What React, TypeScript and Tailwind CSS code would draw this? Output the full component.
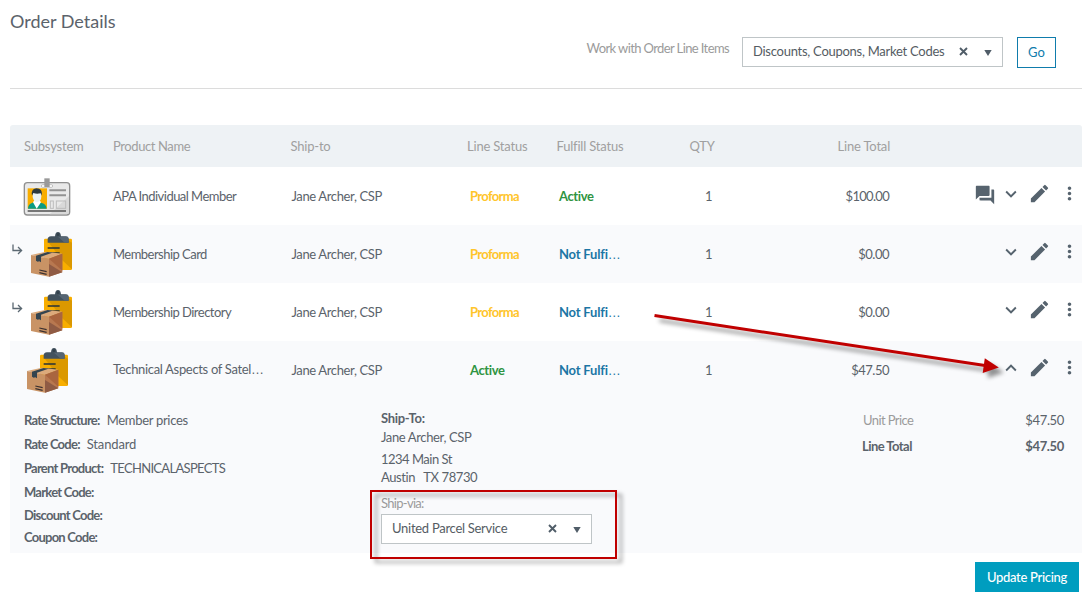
import type { ReactNode } from "react";
import { MdEdit, MdExpandLess, MdExpandMore, MdForum, MdMoreVert } from "react-icons/md";

function BadgeIcon() {
  return (
    <svg width="48" height="38" viewBox="0 0 144 114" className="block">
      <rect x="4" y="14" width="136" height="97" rx="9" fill="#e9e9e9" stroke="#909090" strokeWidth="4" />
      <path d="M80 109L138 54v48q0 7-7 7z" fill="#d9d9d9" />
      <rect x="55" y="20" width="34" height="8" rx="4" fill="#fff" stroke="#aaa" strokeWidth="2" />
      <rect x="64" y="1" width="16" height="26" fill="#999" />
      <rect x="14" y="31" width="58" height="61" fill="#f8ad00" />
      <path d="M15 92q0-14 13-18l12-5 14 5q16 3 17 18z" fill="#0b9b83" />
      <path d="M30 73l11 19 13-19-5-8H35z" fill="#fff" />
      <path d="M29 46q0-12 13-12t13 12v9q0 15-13 18Q29 69 29 55z" fill="#e9f2f5" />
      <path d="M27 53q-4-20 13-22 19 0 17 22l-4-7q-12 3-22-1z" fill="#2b3940" />
      <path d="M79 37h50M79 52h50" stroke="#929292" strokeWidth="6" />
      <rect x="82" y="69" width="9" height="22" fill="none" stroke="#bcbcbc" strokeWidth="3" />
      <rect x="100" y="69" width="28" height="22" fill="none" stroke="#bcbcbc" strokeWidth="3" />
      <path d="M14 99h115" stroke="#777" strokeWidth="6" />
    </svg>
  );
}

function PackageIcon() {
  return (
    <svg width="43" height="47" viewBox="90 198 129 141" className="block">
      <rect x="132" y="221" width="84" height="94" rx="4" fill="#f8ae00" />
      <path d="M143 229l64-2 9 6v80l-30-28z" fill="#db9800" />
      <path d="M143 233v-10q0-8 10-9h12q1-13 9-13t9 13h14q9 1 9 9v10z" fill="#43525e" />
      <path d="M174 215l30 0q2 4 2 18h-12z" fill="#566573" />
      <circle cx="174" cy="209" r="4" fill="#33414b" />
      <path d="M143 249h36M143 264h36" stroke="#263238" strokeWidth="5" />
      <path d="M93 270l44-10 50 6-40 16z" fill="#dcaa7b" />
      <path d="M93 270l54 11v54l-54-11z" fill="#c99365" />
      <path d="M147 281l40-15v56l-40 13z" fill="#b87850" />
      <path d="M147 297l40 25-40 13z" fill="#8f5b44" />
      <path d="M147 281l40-15v51z" fill="#a9653f" />
      <path d="M108 272l35-11 14 2-34 12v17l-5-3-5 1-5-3z" fill="#34444f" />
      <path d="M118 315l22 5M118 323l22 5" stroke="#3a3030" strokeWidth="3.5" />
    </svg>
  );
}

function ChildArrow() {
  return (
    <svg width="11" height="12" viewBox="0 0 11 12" className="block" fill="none" stroke="#5b6872" strokeWidth="1.3">
      <path d="M1 0.5v6h8.5M6 3l3.6 3.5L6 10" />
    </svg>
  );
}

function Select({ className, value }: { className: string; value: string }) {
  return (
    <div className={`flex h-[30px] items-center border border-[#bfc5c7] bg-white pl-[10px] text-[#555c63] ${className}`}>
      <span className="grow whitespace-nowrap pb-[2px]">{value}</span>
      <svg width="9" height="9" viewBox="0 0 9 9" className="mb-px mr-[16px] shrink-0" stroke="#505d68" strokeWidth="1.9">
        <path d="M1 1l7 7M8 1l-7 7" />
      </svg>
      <svg width="8" height="6" viewBox="0 0 8 6" className="mr-[10px] mt-px shrink-0">
        <path d="M0.3 0h7.4L4 6z" fill="#505d68" />
      </svg>
    </div>
  );
}

function Dots() {
  return <span className="font-['Liberation_Sans',sans-serif] font-normal tracking-normal">…</span>;
}

type Line = {
  name: ReactNode;
  kind: "badge" | "package";
  child?: boolean;
  line: string;
  fulfill: string;
  total: ReactNode;
  open?: boolean;
};

const lines: Line[] = [
  {
    name: "APA Individual Member",
    kind: "badge",
    line: "Proforma",
    fulfill: "Active",
    total: <span className="tracking-[-0.7px]">$100.00</span>,
  },
  { name: "Membership Card", kind: "package", child: true, line: "Proforma", fulfill: "Not Fulfi", total: "$0.00" },
  { name: "Membership Directory", kind: "package", child: true, line: "Proforma", fulfill: "Not Fulfi", total: "$0.00" },
  {
    name: (
      <>
        <span className="tracking-[-0.33px]">Technical Aspects of Satel</span>
        <Dots />
      </>
    ),
    kind: "package",
    line: "Active",
    fulfill: "Not Fulfi",
    total: "$47.50",
    open: true,
  },
];

function Status({ value }: { value: string }) {
  if (value === "Proforma") return <span className="font-bold tracking-[-0.65px] text-[#ffc52b]">Proforma</span>;
  if (value === "Active") return <span className="font-bold tracking-[-0.4px] text-[#2f9442]">Active</span>;
  return (
    <span className="text-[#1c76a5]">
      <b className="tracking-[-0.2px]">{value}</b>
      <Dots />
    </span>
  );
}

function Row({ item, shaded }: { item: Line; shaded: boolean }) {
  return (
    <div className={`flex h-[58px] items-center ${shaded ? "bg-[#f9fafc]" : "bg-white"}`}>
      <div className="flex h-full w-[103px] shrink-0">
        {item.kind === "badge" ? (
          <div className="pl-[13px] pt-[11px]">
            <BadgeIcon />
          </div>
        ) : (
          <>
            <div className={item.child ? "w-[20px] pl-[2px] pt-[19px]" : "w-[16px]"}>{item.child && <ChildArrow />}</div>
            <div className="pt-[6px]">
              <PackageIcon />
            </div>
          </>
        )}
      </div>
      <div className="w-[178px] shrink-0 whitespace-nowrap pb-px tracking-[-0.53px]">{item.name}</div>
      <div className="w-[179px] shrink-0 pb-px pl-[0.5px] tracking-[-0.37px]">Jane Archer, CSP</div>
      <div className="w-[89px] shrink-0">
        <Status value={item.line} />
      </div>
      <div className="w-[146px] shrink-0 whitespace-nowrap">
        <Status value={item.fulfill} />
      </div>
      <div className="flex w-[184px] shrink-0 pb-px">
        <span className="grow">1</span>
        <span className="tracking-[-0.5px]">{item.total}</span>
      </div>
      <div className="flex grow items-center justify-end pb-[6px] text-[#56636e]">
        {item.kind === "badge" && <MdForum className="mr-[4px] mt-[3px] size-[22px]" />}
        {item.open ? (
          <MdExpandLess className="mt-[2px] size-[22px]" />
        ) : (
          <MdExpandMore className="mt-[2px] size-[22px]" />
        )}
        <MdEdit className="ml-[6px] mt-px size-[23px]" />
        <MdMoreVert className="ml-[8px] mr-[2px] size-[21px]" />
      </div>
    </div>
  );
}

function Field({
  label,
  value,
  className,
  valueClass = "",
}: {
  label: string;
  value?: string;
  className: string;
  valueClass?: string;
}) {
  return (
    <div className={`flex items-center whitespace-nowrap ${className}`}>
      <b className="tracking-[-0.75px]">{label}</b>
      {value && <span className={`ml-[7px] ${valueClass}`}>{value}</span>}
    </div>
  );
}

export default function App() {
  return (
    <div className="relative h-[599px] w-[1091px] overflow-hidden bg-white pl-[10px] pr-[9px] font-['Lato',sans-serif] text-[13px] leading-[18px] text-[#5b636b]">
      <header className="flex h-[89px] items-start border-b border-[#dcdcdc]">
        <h1 className="grow pt-[9px] text-[18px] leading-[24px]">Order Details</h1>
        <span className="mr-[13px] mt-[39px] tracking-[-0.61px] text-[#9b9b9b]">Work with Order Line Items</span>
        <Select className="mt-[37px] w-[261px] tracking-[-0.26px]" value="Discounts, Coupons, Market Codes" />
        <button className="ml-[14px] mr-[26px] mt-[37px] h-[31px] w-[39px] border border-[#0f7cac] pb-[2px] text-[#0f7cac]">
          Go
        </button>
      </header>

      <main className="pt-[36px]">
        <div className="flex h-[42px] items-center rounded-t-[3px] bg-[#eef2f5] pb-px tracking-[-0.2px] text-[#a0a0a0]">
          <div className="w-[89px] pl-[14px]">Subsystem</div>
          <div className="w-[191.5px] pl-[14px] tracking-[-0.4px]">Product Name</div>
          <div className="w-[176.5px]">Ship-to</div>
          <div className="w-[89.5px]">Line Status</div>
          <div className="w-[133px]">Fulfill Status</div>
          <div className="w-[100px]">QTY</div>
          <div className="w-[100.5px] text-right">Line Total</div>
        </div>
        {lines.map((item, i) => (
          <Row key={i} item={item} shaded={i % 2 === 1} />
        ))}

        <section className="flex h-[154px] bg-[#f9fafc] pl-[14px]">
          <div className="w-[357px] pt-[9px]">
            <Field className="h-[24px]" label="Rate Structure:" value="Member prices" valueClass="tracking-[-0.3px]" />
            <Field className="h-[24px]" label="Rate Code:" value="Standard" valueClass="tracking-[-0.15px]" />
            <Field className="h-[24px]" label="Parent Product:" value="TECHNICALASPECTS" valueClass="tracking-[-0.68px]" />
            <Field className="h-[24px]" label="Market Code:" />
            <Field className="h-[22px]" label="Discount Code:" />
            <Field className="h-[22px]" label="Coupon Code:" />
          </div>
          <div className="w-[482px] pt-[10px]">
            <b className="block tracking-[-0.3px]">Ship-To:</b>
            <div className="pt-px tracking-[-0.37px]">Jane Archer, CSP</div>
            <div className="pt-[4px] tracking-[-0.5px]">1234 Main St</div>
            <div className="whitespace-pre tracking-[-0.42px]">Austin   TX 78730</div>
            <div className="pt-[8px] tracking-[-0.7px] text-[#9b9b9b]">Ship-via:</div>
            <Select className="mt-[2px] w-[211px] tracking-[-0.28px]" value="United Parcel Service" />
          </div>
          <div className="w-[201px] pt-[12px]">
            <div className="flex justify-between">
              <span className="tracking-[-0.6px] text-[#9b9b9b]">Unit Price</span>
              <span className="tracking-[-0.35px]">$47.50</span>
            </div>
            <div className="flex justify-between pt-[8px] font-bold">
              <span className="-ml-px tracking-[-0.55px]">Line Total</span>
              <span className="tracking-[-0.35px]">$47.50</span>
            </div>
          </div>
        </section>
      </main>

      <footer className="flex justify-end pr-[3px] pt-[9px]">
        <button className="h-[30px] w-[104px] bg-[#009dbf] pb-px font-medium tracking-[-0.3px] text-white">
          Update Pricing
        </button>
      </footer>

      <div className="absolute left-[370px] top-[490px] h-[69px] w-[247px] border-2 border-[#c00000] [filter:drop-shadow(5px_4px_2px_rgba(0,0,0,0.4))]" />
      <svg
        width="370"
        height="80"
        viewBox="645 305 370 80"
        className="absolute left-[645px] top-[305px] [filter:drop-shadow(5px_5px_2px_rgba(0,0,0,0.42))]"
      >
        <path d="M654.5 315.5L985 365.6" stroke="#c00000" strokeWidth="3" />
        <path d="M984.8 358.3L998.8 367.5L982.7 373z" fill="#c00000" />
      </svg>
    </div>
  );
}
